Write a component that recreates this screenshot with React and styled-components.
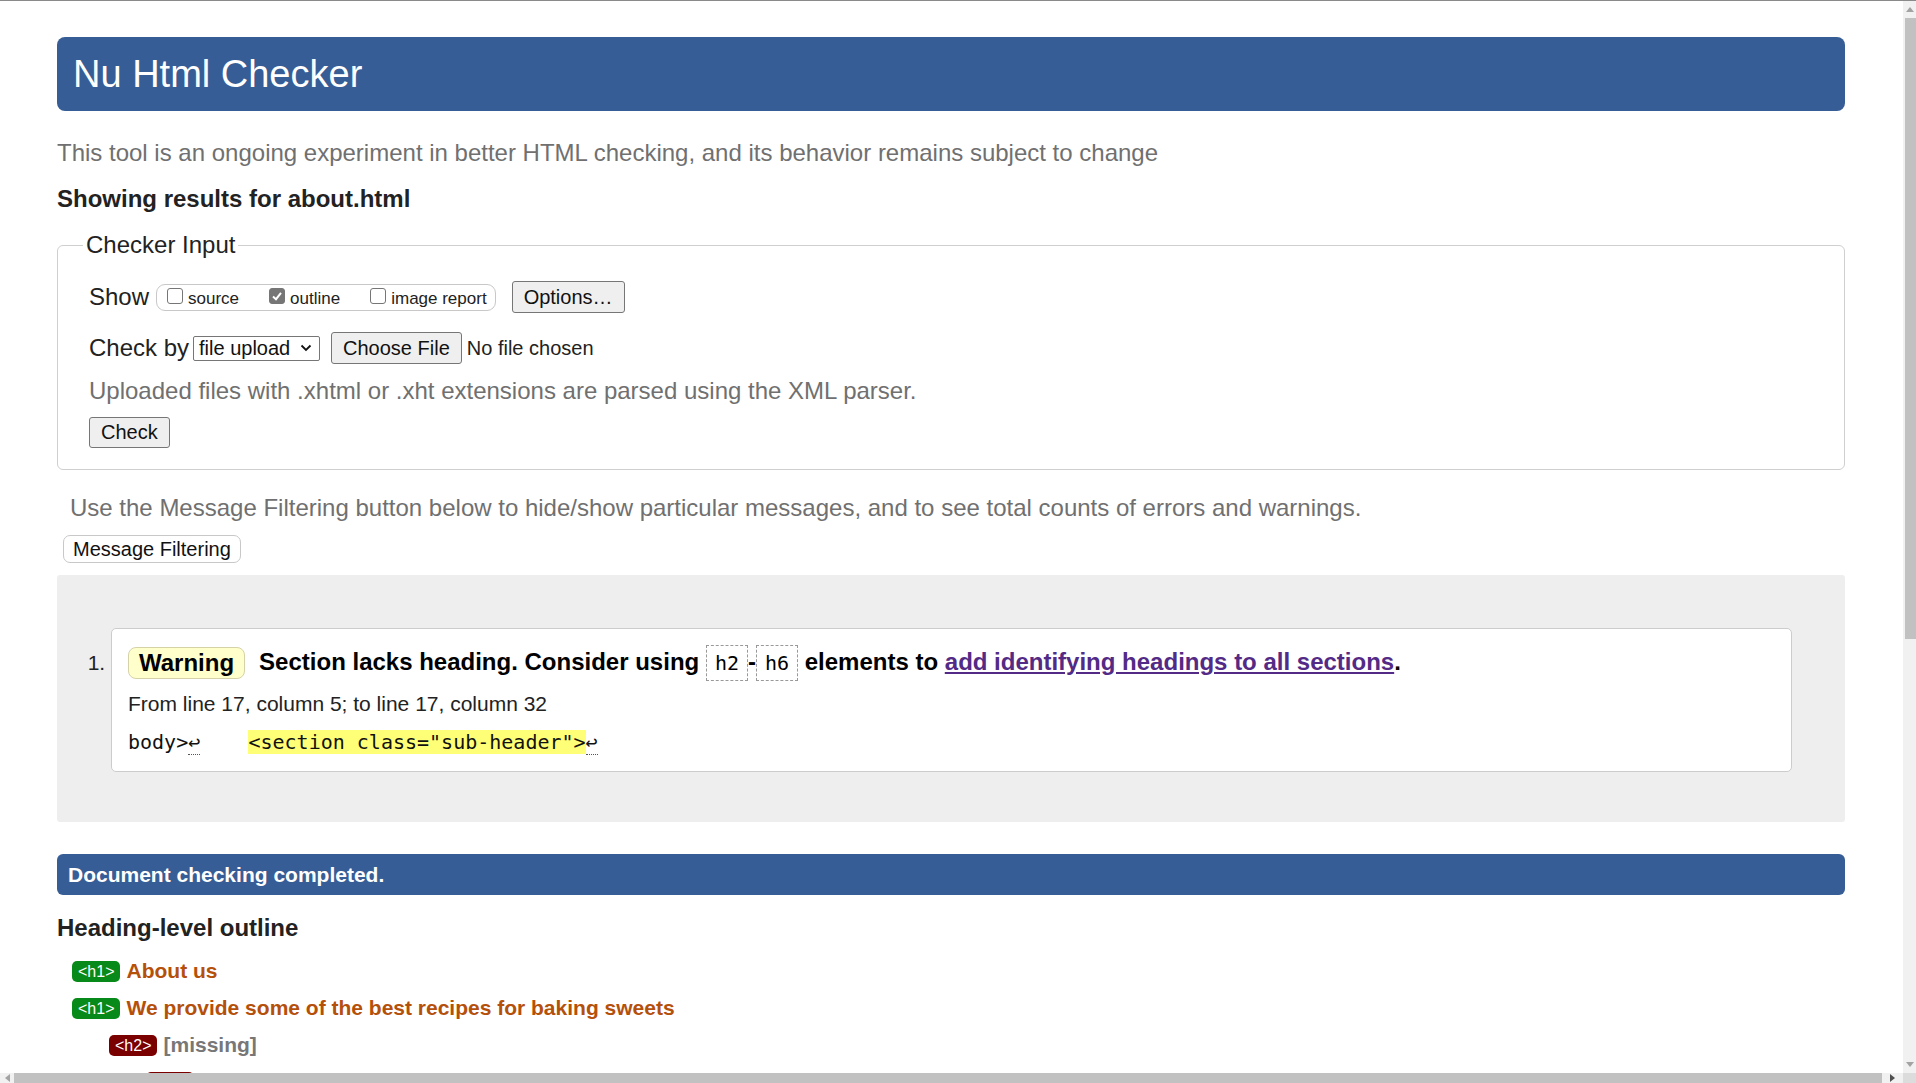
import React from 'react';
import styled, { createGlobalStyle } from 'styled-components';

const GlobalStyle = createGlobalStyle`
  html, body {
    margin: 0;
    padding: 0;
    height: 100%;
    overflow: hidden;
  }
  body {
    font-family: 'Liberation Sans', Arial, sans-serif;
    color: #222;
    background: #fff;
  }
  #root {
    height: 100%;
  }
`;

const Viewport = styled.div`
  height: 100vh;
  display: grid;
  grid-template-columns: 1fr 13px;
  grid-template-rows: 1px 1fr 10px;
`;

const TopEdge = styled.div`
  grid-column: 1 / 3;
  background: #8a8a8a;
`;

const Main = styled.main`
  min-width: 0;
  overflow: hidden;
  padding: 36px 58px 0 57px;
`;

const Banner = styled.h1`
  margin: 0;
  height: 74px;
  line-height: 74px;
  padding-left: 16px;
  background: #365d95;
  border-radius: 8px;
  color: #fff;
  font-size: 38px;
  font-weight: normal;
`;

const Note = styled.p`
  margin: ${(p) => p.$margin || '0'};
  font-size: 24px;
  line-height: 28px;
  color: #707070;
`;

const Subtitle = styled.h2`
  margin: ${(p) => p.$margin || '0'};
  font-size: 24px;
  line-height: 28px;
  font-weight: bold;
  color: #222;
`;

const Fieldset = styled.fieldset`
  margin: 18px 0 0;
  padding: 0 30px 21px 31px;
  border: 1px solid #cfcfcf;
  border-radius: 6px;
  min-width: 0;
`;

const Legend = styled.legend`
  margin-left: -6px;
  padding: 0 3px;
  font-size: 24px;
  line-height: 28px;
  color: #222;
`;

const Row = styled.div`
  display: flex;
  align-items: center;
  height: 32px;
  margin-top: ${(p) => p.$top}px;
  font-size: 24px;
`;

const Group = styled.span`
  display: inline-flex;
  align-items: center;
  box-sizing: border-box;
  height: 27px;
  margin-left: 7px;
  padding: 0 8px 0 10px;
  border: 1px solid #c8c8c8;
  border-radius: 9px;
`;

const Choice = styled.label`
  display: inline-flex;
  align-items: center;
  gap: 5px;
  margin-right: ${(p) => (p.$last ? 0 : 30)}px;
  font-size: 17px;
  color: #222;
  padding-top: 3px;
`;

const Box = styled.span`
  display: inline-flex;
  align-items: center;
  justify-content: center;
  box-sizing: border-box;
  width: 16px;
  height: 16px;
  margin-top: -6px;
  border: 1px solid #767676;
  border-radius: 3px;
  background: ${(p) => (p.$checked ? '#767676' : '#fff')};
`;

const Button = styled.button`
  box-sizing: border-box;
  height: ${(p) => p.$h || 32}px;
  margin-left: ${(p) => p.$left || 0}px;
  padding: 0 11px;
  border: 1px solid #767676;
  border-radius: 3px;
  background: #efefef;
  font-family: 'Liberation Sans', Arial, sans-serif;
  font-size: 20px;
  color: #111;
`;

const FilterButton = styled(Button)`
  height: 28px;
  margin: 13px 0 0 6px;
  padding: 0 9px;
  background: #fff;
  border-color: #c8c8c8;
  border-radius: 7px;
`;

const Select = styled.span`
  display: inline-flex;
  align-items: center;
  justify-content: space-between;
  box-sizing: border-box;
  width: 127px;
  height: 25px;
  margin-left: 4px;
  padding: 0 7px 0 5px;
  border: 1px solid #767676;
  border-radius: 2px;
  font-size: 20px;
  color: #111;
`;

const Plain = styled.span`
  margin-left: ${(p) => p.$left || 0}px;
  font-size: 20px;
  color: #222;
`;

const Results = styled.div`
  margin-top: 12px;
  background: #eee;
  border-radius: 3px;
`;

const Messages = styled.ol`
  margin: 0;
  padding: 53px 53px 50px 54px;
`;

const Message = styled.li`
  padding: 14px 16px 16px;
  background: #fff;
  border: 1px solid #ccc;
  border-radius: 5px;
  font-size: 21px;
  color: #222;
`;

const Headline = styled.p`
  margin: 0;
  font-size: 24px;
  line-height: 37px;
  font-weight: bold;
  color: #000;
`;

const Badge = styled.strong`
  display: inline-block;
  vertical-align: middle;
  margin: -2px 14px 0 0;
  padding: 0 10px;
  line-height: 30px;
  background: #ffffcc;
  border: 1px solid #d6d2a8;
  border-radius: 8px;
`;

const Code = styled.code`
  display: inline-block;
  vertical-align: middle;
  margin-top: -2px;
  padding: 0 8px;
  line-height: 34px;
  border: 1px dashed #999;
  font-family: 'DejaVu Sans Mono', monospace;
  font-size: 20px;
  font-weight: normal;
`;

const Link = styled.a`
  color: #532a85;
  text-decoration: underline;
`;

const Location = styled.p`
  margin: 10px 0 0;
  font-size: 21px;
  line-height: 26px;
`;

const Extract = styled.p`
  margin: 12px 0 0;
  font-family: 'DejaVu Sans Mono', monospace;
  font-size: 20px;
  line-height: 26px;
  white-space: pre;
  color: #111;
`;

const Mark = styled.mark`
  background: #ffff77;
  color: inherit;
`;

const Break = styled.span`
  border-bottom: 1px dotted #555;
`;

const DoneBar = styled.div`
  margin-top: 32px;
  height: 41px;
  line-height: 41px;
  padding-left: 11px;
  background: #365d95;
  border-radius: 6px;
  color: #fff;
  font-size: 21px;
  font-weight: bold;
`;

const Outline = styled.ol`
  list-style: none;
  margin: 11px 0 0;
  padding: 0;
`;

const OutlineRow = styled.li`
  display: flex;
  align-items: center;
  gap: 6px;
  height: 37px;
  padding-left: ${(p) => 15 + (p.$level - 1) * 37}px;
  font-size: 21px;
  font-weight: bold;
  color: ${(p) => (p.$missing ? '#777' : '#b5500b')};
`;

const Level = styled.span`
  display: inline-block;
  padding: 0 6px;
  line-height: 21px;
  border-radius: 5px;
  background: ${(p) => (p.$missing ? '#7a0000' : '#088a1a')};
  color: #fff;
  font-size: 16px;
  font-weight: normal;
`;

const VScroll = styled.div`
  display: flex;
  flex-direction: column;
  align-items: flex-end;
  background: #f1f1f1;
`;

const ArrowCell = styled.div`
  display: flex;
  align-items: center;
  justify-content: center;
  width: ${(p) => p.$w || '100%'};
  height: ${(p) => p.$h || '100%'};
  margin-top: ${(p) => (p.$end ? 'auto' : 0)};
  flex-shrink: 0;
`;

const VThumb = styled.div`
  width: 11px;
  height: 621px;
  background: #c1c1c1;
`;

const HScroll = styled.div`
  grid-column: 1 / 3;
  display: flex;
  background: #f1f1f1;
`;

const HThumb = styled.div`
  flex: 1;
  background: #c1c1c1;
`;

const Corner = styled.div`
  width: 13px;
  background: #dcdcdc;
`;

const Tri = ({ dir }) => {
  const pts = {
    up: '0,5 4,0 8,5',
    down: '0,0 8,0 4,5',
    left: '5,0 5,8 0,4',
    right: '0,0 5,4 0,8',
  }[dir];
  const vertical = dir === 'up' || dir === 'down';
  return (
    <svg width={vertical ? 8 : 5} height={vertical ? 5 : 8} viewBox={vertical ? '0 0 8 5' : '0 0 5 8'}>
      <polygon points={pts} fill={dir === 'right' ? '#505050' : '#a3a3a3'} />
    </svg>
  );
};

const Tick = () => (
  <svg width="12" height="12" viewBox="0 0 12 12">
    <path d="M2 6.5 L5 9.2 L10 2.8" fill="none" stroke="#fff" strokeWidth="2" />
  </svg>
);

const Chevron = () => (
  <svg width="12" height="8" viewBox="0 0 12 8">
    <path d="M1.5 1.5 L6 6 L10.5 1.5" fill="none" stroke="#111" strokeWidth="1.8" />
  </svg>
);

const outline = [
  { level: 1, tag: '<h1>', text: 'About us' },
  { level: 1, tag: '<h1>', text: 'We provide some of the best recipes for baking sweets' },
  { level: 2, tag: '<h2>', text: '[missing]', missing: true },
  { level: 3, tag: '<h3>', text: '[missing]', missing: true },
];

const App = () => (
  <>
    <GlobalStyle />
    <Viewport>
      <TopEdge />
      <Main>
        <Banner>Nu Html Checker</Banner>
        <Note $margin="28px 0 0">
          This tool is an ongoing experiment in better HTML checking, and its behavior remains subject to change
        </Note>
        <Subtitle $margin="18px 0 0">Showing results for about.html</Subtitle>

        <Fieldset>
          <Legend>Checker Input</Legend>
          <Row $top={22}>
            <span>Show</span>
            <Group>
              <Choice>
                <Box />
                source
              </Choice>
              <Choice>
                <Box $checked>
                  <Tick />
                </Box>
                outline
              </Choice>
              <Choice $last>
                <Box />
                image report
              </Choice>
            </Group>
            <Button type="button" $left={16}>
              Options…
            </Button>
          </Row>
          <Row $top={19}>
            <span>Check by</span>
            <Select>
              file upload
              <Chevron />
            </Select>
            <Button type="button" $left={11}>
              Choose File
            </Button>
            <Plain $left={5}>No file chosen</Plain>
          </Row>
          <Note $margin="13px 0 0">Uploaded files with .xhtml or .xht extensions are parsed using the XML parser.</Note>
          <Button type="button" $h={31} style={{ marginTop: 12 }}>
            Check
          </Button>
        </Fieldset>

        <Note $margin="24px 0 0 13px">
          Use the Message Filtering button below to hide/show particular messages, and to see total counts of errors
          and warnings.
        </Note>
        <FilterButton type="button">Message Filtering</FilterButton>

        <Results>
          <Messages>
            <Message>
              <Headline>
                <Badge>Warning</Badge>Section lacks heading. Consider using <Code>h2</Code>-<Code>h6</Code> elements to{' '}
                <Link href="#">add identifying headings to all sections</Link>.
              </Headline>
              <Location>From line 17, column 5; to line 17, column 32</Location>
              <Extract>
                body&gt;<Break>↩</Break>
                {'    '}
                <Mark>&lt;section class="sub-header"&gt;</Mark>
                <Break>↩</Break>
              </Extract>
            </Message>
          </Messages>
        </Results>

        <DoneBar>Document checking completed.</DoneBar>
        <Subtitle $margin="19px 0 0">Heading-level outline</Subtitle>
        <Outline>
          {outline.map((item, i) => (
            <OutlineRow key={i} $level={item.level} $missing={item.missing}>
              <Level $missing={item.missing}>{item.tag}</Level>
              {item.text}
            </OutlineRow>
          ))}
        </Outline>
      </Main>

      <VScroll>
        <ArrowCell $h="17px">
          <Tri dir="up" />
        </ArrowCell>
        <VThumb />
        <ArrowCell $h="17px" $end>
          <Tri dir="down" />
        </ArrowCell>
      </VScroll>

      <HScroll>
        <ArrowCell $w="14px">
          <Tri dir="left" />
        </ArrowCell>
        <HThumb />
        <ArrowCell $w="21px">
          <Tri dir="right" />
        </ArrowCell>
        <Corner />
      </HScroll>
    </Viewport>
  </>
);

export default App;
